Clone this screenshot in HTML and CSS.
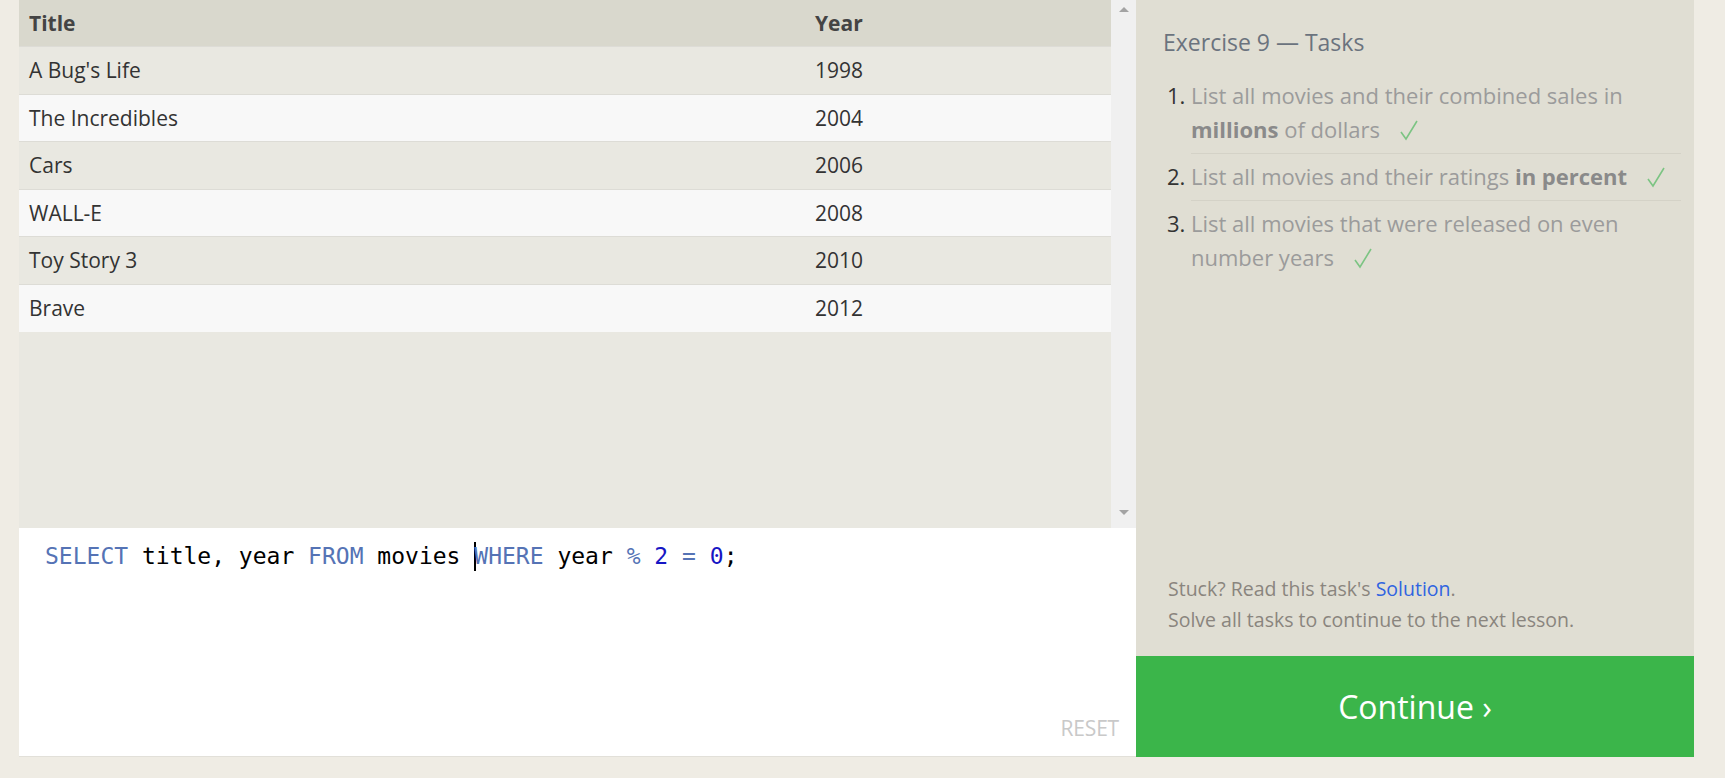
FILE: index.html
```html
<!DOCTYPE html>
<html lang="en">
<head>
<meta charset="utf-8">
<title>SQL Exercise 9</title>
<link rel="stylesheet" href="styles.css">
</head>
<body>
<div class="main">
  <div class="left">
    <div class="results">
      <div class="table-wrap">
        <table class="table">
          <thead>
            <tr><th class="col-title">Title</th><th>Year</th></tr>
          </thead>
          <tbody>
            <tr><td>A Bug's Life</td><td>1998</td></tr>
            <tr><td>The Incredibles</td><td>2004</td></tr>
            <tr><td>Cars</td><td>2006</td></tr>
            <tr><td>WALL-E</td><td>2008</td></tr>
            <tr><td>Toy Story 3</td><td>2010</td></tr>
            <tr><td>Brave</td><td>2012</td></tr>
          </tbody>
        </table>
      </div>
      <div class="scrollbar">
        <span class="arrow arrow-up"></span>
        <span class="arrow arrow-down"></span>
      </div>
    </div>
    <div class="editor">
      <pre class="code"><span class="kw">SELECT</span> title, year <span class="kw">FROM</span> movies <span class="cursor"></span><span class="kw">WHERE</span> year <span class="kw">%</span> <span class="num">2</span> <span class="kw">=</span> <span class="num">0</span>;</pre>
      <div class="reset">RESET</div>
    </div>
  </div>
  <div class="side">
    <div class="tasks">
      <h2 class="tasks-title">Exercise 9 — Tasks</h2>
      <ol class="task-list">
        <li><span class="task-text">List all movies and their combined sales in <b>millions</b> of dollars<svg class="check" viewBox="0 0 18 22" width="18" height="22" aria-hidden="true"><polyline points="1,13 6,20 17,2" fill="none" stroke="currentColor" stroke-width="1.6"/></svg></span></li>
        <li><span class="task-text">List all movies and their ratings <b>in percent</b><svg class="check" viewBox="0 0 18 22" width="18" height="22" aria-hidden="true"><polyline points="1,13 6,20 17,2" fill="none" stroke="currentColor" stroke-width="1.6"/></svg></span></li>
        <li><span class="task-text">List all movies that were released on even number years<svg class="check" viewBox="0 0 18 22" width="18" height="22" aria-hidden="true"><polyline points="1,13 6,20 17,2" fill="none" stroke="currentColor" stroke-width="1.6"/></svg></span></li>
      </ol>
      <div class="help">
        <div>Stuck? Read this task's <a class="link" href="#">Solution</a>.</div>
        <div>Solve all tasks to continue to the next lesson.</div>
      </div>
    </div>
    <a class="continue" href="#">Continue ›</a>
  </div>
</div>
</body>
</html>
```

FILE: styles.css
```css
html, body {
  margin: 0;
  padding: 0;
}

body {
  background: #efece4;
  font-family: "Open Sans", "Noto Sans", sans-serif;
  width: 1725px;
  height: 778px;
  overflow: hidden;
}

.main {
  display: flex;
  padding-left: 19px;
  height: 757px;
}

.left {
  width: 1117px;
  display: flex;
  flex-direction: column;
}

.results {
  height: 528px;
  flex: none;
  display: flex;
  background: #e9e8e1;
}

.table-wrap {
  flex: 1;
}

.table {
  width: 100%;
  border-collapse: collapse;
  font-size: 21px;
  color: #333;
}

.table th {
  height: 46px;
  padding: 0 10px;
  text-align: left;
  font-weight: 700;
  color: #444;
  background: #d9d8cd;
}

.table th.col-title {
  width: 766px;
}

.table td {
  height: 47.5px;
  padding: 0 10px;
  border-top: 1px solid #dddcd6;
  box-sizing: border-box;
}

.table tbody tr:nth-child(odd) td {
  background: #e9e8e1;
}

.table tbody tr:nth-child(even) td {
  background: #f8f8f8;
}

.scrollbar {
  width: 25px;
  background: #f0f0f0;
  display: flex;
  flex-direction: column;
  justify-content: space-between;
  align-items: center;
  padding: 7px 0 13px;
  box-sizing: border-box;
}

.arrow {
  width: 0;
  height: 0;
  border-left: 5px solid transparent;
  border-right: 5px solid transparent;
}

.arrow-up {
  border-bottom: 5px solid #a3a3a3;
}

.arrow-down {
  border-top: 5px solid #a3a3a3;
}

.editor {
  flex: 1;
  background: #fff;
  border-bottom: 1px solid #e2e0d9;
  display: flex;
  flex-direction: column;
  padding: 13px 17px 14px 26px;
}

.code {
  margin: 0;
  font-family: "DejaVu Sans Mono", "Liberation Mono", monospace;
  font-size: 23px;
  line-height: 30px;
  color: #000;
}

.kw {
  color: #5573b5;
}

.num {
  color: #1616c4;
}

.cursor {
  display: inline-block;
  width: 2px;
  height: 29px;
  background: #000;
  vertical-align: -7px;
  margin-right: -2px;
}

.reset {
  margin-top: auto;
  align-self: flex-end;
  font-size: 21px;
  color: #c9c9c9;
  letter-spacing: -0.2px;
}

.side {
  width: 558px;
  display: flex;
  flex-direction: column;
}

.tasks {
  flex: 1;
  background: #e0ded3;
  padding: 27px 13px 21px 27px;
  display: flex;
  flex-direction: column;
}

.tasks-title {
  margin: 0;
  font-size: 23px;
  line-height: 30px;
  font-weight: 400;
  color: #6b737e;
}

.task-list {
  margin: 21px 0 0;
  padding-left: 28px;
  font-size: 22px;
  line-height: 34px;
  color: #333;
}

.task-list li {
  padding: 5px 0 7px;
  border-bottom: 1px solid #d4d2c7;
}

.task-list li:first-child {
  padding-top: 0;
}

.task-list li:last-child {
  border-bottom: none;
}

.task-text {
  color: #9b9b9b;
}

.task-text b {
  color: #8a8a8a;
  font-weight: 700;
}

.check {
  color: #7cc483;
  margin-left: 20px;
  vertical-align: -3px;
}

.help {
  margin-top: auto;
  margin-left: 5px;
  font-size: 19.5px;
  line-height: 31px;
  color: #8a857e;
}

.link {
  color: #3064e0;
  text-decoration: none;
}

.continue {
  height: 101px;
  flex: none;
  background: #3bb54a;
  color: #fff;
  font-size: 32px;
  text-decoration: none;
  display: flex;
  align-items: center;
  justify-content: center;
}
```
